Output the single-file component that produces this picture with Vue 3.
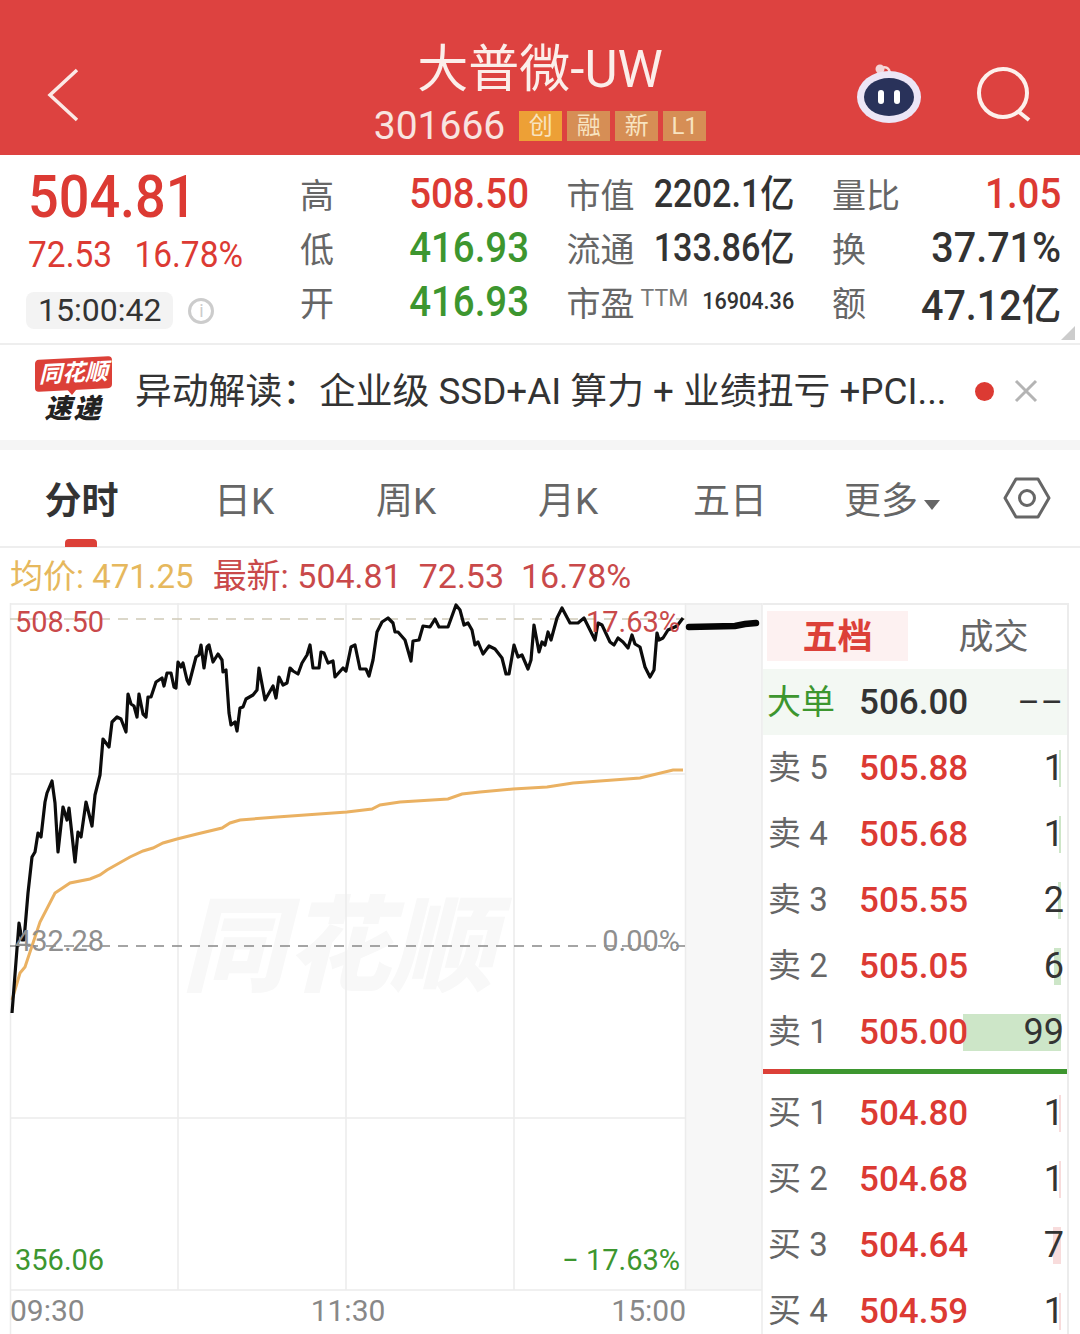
<template>
  <div class="page">
    <header class="topbar">
      <svg class="back" width="40" height="60" viewBox="0 0 40 60"><path d="M33 5 L6 30 L33 55" fill="none" stroke="#fbe9e6" stroke-width="3.5" /></svg>
      <div class="title-box">
        <div class="title">大普微-UW</div>
        <div class="subline">
          <span class="code">301666</span>
          <span v-for="(t, i) in tags" :key="t" class="tag" :class="{ first: i === 0 }">{{ t }}</span>
        </div>
      </div>
      <div class="top-icons">
        <svg width="70" height="70" viewBox="0 0 70 70">
          <path d="M26 10 C30 5 36 7 36 15" fill="none" stroke="#f6dcdc" stroke-width="2.5" />
          <circle cx="26" cy="9" r="4.5" fill="#f3d5d8" />
          <ellipse cx="35" cy="37" rx="32" ry="26" fill="#ece6f6" />
          <ellipse cx="35" cy="37" rx="25" ry="19" fill="#29325a" />
          <rect x="24" y="30" width="6" height="14" rx="3" fill="#fff" />
          <rect x="40" y="30" width="6" height="14" rx="3" fill="#fff" />
        </svg>
        <svg width="60" height="60" viewBox="0 0 60 60">
          <circle cx="26" cy="28" r="24" fill="none" stroke="#fdf0ec" stroke-width="4" />
          <path d="M42 47 L52 55" stroke="#fdf0ec" stroke-width="4" />
        </svg>
      </div>
    </header>

    <section class="quote">
      <div class="q-main">
        <div class="price">504.81</div>
        <div class="change"><span>72.53</span><span>16.78%</span></div>
        <div class="time-row">
          <span class="time">15:00:42</span>
          <span class="info">i</span>
        </div>
      </div>
      <div class="q-grid">
        <template v-for="row in quoteRows" :key="row.a">
          <div class="q-cell">
            <span class="q-label">{{ row.a }}</span>
            <span class="q-val" :class="row.ac">{{ row.av }}</span>
          </div>
          <div class="q-cell">
            <span class="q-label">{{ row.b }}<sup v-if="row.sup" class="ttm">{{ row.sup }}</sup></span>
            <span class="q-mid" :class="{ tiny: row.sup }">{{ row.bv }}</span>
          </div>
          <div class="q-cell">
            <span class="q-label">{{ row.c }}</span>
            <span class="q-val" :class="row.cc">{{ row.cv }}</span>
          </div>
        </template>
      </div>
      <i class="corner"></i>
    </section>

    <section class="news">
      <div class="logo">
        <div class="logo-top"><span>同花顺</span></div>
        <div class="logo-bottom">速递</div>
      </div>
      <div class="news-text">异动解读：企业级 SSD+AI 算力 + 业绩扭亏 +PCI...</div>
      <span class="dot"></span>
      <svg class="close" width="24" height="24" viewBox="0 0 24 24"><path d="M2 2 L22 22 M22 2 L2 22" stroke="#b4b4b4" stroke-width="3" /></svg>
    </section>

    <nav class="tabs">
      <div v-for="t in tabs" :key="t" class="tab" :class="{ active: t === '分时' }">
        {{ t }}<i v-if="t === '更多'" class="caret"></i>
      </div>
      <div class="tab-setting">
        <svg width="48" height="44" viewBox="0 0 48 44">
          <path d="M13 3 H35 L46 22 L35 41 H13 L2 22 Z" fill="none" stroke="#666" stroke-width="3" stroke-linejoin="round" />
          <circle cx="24" cy="22" r="7.5" fill="none" stroke="#666" stroke-width="3" />
        </svg>
      </div>
    </nav>

    <div class="legend">
      <span class="avg">均价: 471.25</span>
      <span class="latest">最新: 504.81&nbsp; 72.53&nbsp; 16.78%</span>
    </div>

    <section class="market">
      <div class="chart">
        <div class="after-hours"></div>
        <div class="watermark">同花顺</div>
        <svg class="plot" width="763" height="731" viewBox="0 603 763 731">
          <g stroke="#ececec" stroke-width="1.5" fill="none">
            <path d="M10.5 603 V1334 M178 603 V1290 M346 603 V1290 M514 603 V1290 M685.5 603 V1290 M762 603 V1334" />
            <path d="M10 604 H762 M10 774 H685 M10 1118 H685 M10 1290 H762" />
          </g>
          <path d="M10 619 H685" stroke="#cfcab8" stroke-width="1.5" stroke-dasharray="10 8" />
          <path d="M10 946 H685" stroke="#888" stroke-width="1.5" stroke-dasharray="10 8" />
          <polyline :points="avgLine" fill="none" stroke="#eab162" stroke-width="3" />
          <polyline :points="priceLine" fill="none" stroke="#0c0c0c" stroke-width="3.2" stroke-linejoin="round" />
          <path d="M689 627 L735 626 L745 624 L756 623" fill="none" stroke="#050505" stroke-width="6.5" stroke-linecap="round" />
        </svg>
        <span class="axis red" style="left:15px;top:1px">508.50</span>
        <span class="axis red right" style="top:1px">17.63%</span>
        <span class="axis gray" style="left:15px;top:320px">432.28</span>
        <span class="axis gray right" style="top:320px">0.00%</span>
        <span class="axis green" style="left:15px;top:639px">356.06</span>
        <span class="axis green right" style="top:639px">− 17.63%</span>
        <div class="times"><span>09:30</span><span>11:30</span><span>15:00</span></div>
      </div>

      <aside class="book">
        <div class="book-tabs">
          <span class="book-tab on">五档</span>
          <span class="book-tab">成交</span>
        </div>
        <div class="row big">
          <span class="name">大单</span>
          <span class="val dark">506.00</span>
          <span class="qty dash">––</span>
        </div>
        <div v-for="r in sells" :key="r.n" class="row">
          <span class="name">{{ r.n }}</span>
          <span class="val">{{ r.p }}</span>
          <span class="qty"><i class="depth sell" :style="{ width: r.w + 'px' }"></i><b>{{ r.q }}</b></span>
        </div>
        <div class="ratio"><i></i></div>
        <div v-for="r in buys" :key="r.n" class="row">
          <span class="name">{{ r.n }}</span>
          <span class="val">{{ r.p }}</span>
          <span class="qty"><i class="depth buy" :style="{ width: r.w + 'px' }"></i><b>{{ r.q }}</b></span>
        </div>
      </aside>
    </section>
  </div>
</template>

<script setup>
const tags = ['创', '融', '新', 'L1']
const tabs = ['分时', '日K', '周K', '月K', '五日', '更多']

const quoteRows = [
  { a: '高', av: '508.50', ac: 'up', b: '市值', bv: '2202.1亿', c: '量比', cv: '1.05', cc: 'up' },
  { a: '低', av: '416.93', ac: 'down', b: '流通', bv: '133.86亿', c: '换', cv: '37.71%', cc: '' },
  { a: '开', av: '416.93', ac: 'down', b: '市盈', sup: 'TTM', bv: '16904.36', c: '额', cv: '47.12亿', cc: '' },
]

const sells = [
  { n: '卖 5', p: '505.88', q: 1, w: 2 },
  { n: '卖 4', p: '505.68', q: 1, w: 2 },
  { n: '卖 3', p: '505.55', q: 2, w: 3 },
  { n: '卖 2', p: '505.05', q: 6, w: 7 },
  { n: '卖 1', p: '505.00', q: 99, w: 98 },
]
const buys = [
  { n: '买 1', p: '504.80', q: 1, w: 2 },
  { n: '买 2', p: '504.68', q: 1, w: 2 },
  { n: '买 3', p: '504.64', q: 7, w: 8 },
  { n: '买 4', p: '504.59', q: 1, w: 2 },
]

const priceLine = '12,1013 19,923 22,940 24,940 28,893 32,857 35,852 38,833 41,837 45,802 47,793 52,781 55,803 58,852 63,807 67,820 69,808 75,862 78,832 81,837 86,802 92,826 95,795 100,775 103,739 109,747 112,722 117,717 121,719 126,732 128,694 131,704 134,706 137,717 139,694 143,714 146,717 148,697 151,697 156,682 162,678 164,686 167,673 171,673 174,687 176,688 178,662 181,667 183,663 187,680 189,684 196,657 199,655 201,645 204,668 207,647 209,645 213,662 218,654 222,660 223,672 226,670 229,713 231,725 235,722 237,731 240,708 243,707 246,699 253,695 257,690 259,668 265,700 273,686 276,698 279,677 283,685 287,683 290,668 293,671 298,674 302,663 307,655 310,645 313,668 319,668 321,652 324,653 328,663 333,661 335,677 343,668 346,671 351,647 355,645 360,669 366,669 369,676 373,660 377,632 382,622 388,618 393,623 395,632 398,632 405,640 411,661 413,641 419,640 423,626 430,627 435,619 439,627 448,627 456,605 460,610 464,625 468,623 472,630 475,645 478,642 483,654 489,646 495,649 502,658 506,674 509,674 514,645 518,657 522,655 528,669 531,660 534,625 539,652 542,642 545,645 548,632 551,640 557,618 562,608 570,623 578,623 584,618 595,640 598,623 602,625 610,642 614,645 618,638 623,642 628,648 632,635 635,644 640,647 645,667 650,677 654,670 657,633 659,640 663,638 668,630 677,626 683,618'

const avgLine = '12,1000 20,973 25,967 40,922 55,893 70,883 90,879 100,875 107,870 130,857 143,851 153,848 163,843 177,839 197,834 222,828 230,823 240,820 277,817 347,812 372,809 380,805 400,802 448,799 462,794 480,792 513,789 547,787 573,783 640,778 673,770 683,770'
</script>

<style scoped>
.page{width:1080px;height:1334px;overflow:hidden;background:#fff;font-family:Roboto,"Noto Sans CJK SC",sans-serif;color:#333}
.topbar{height:155px;box-sizing:border-box;padding-top:35px;background:#dd4240;display:grid;grid-template-columns:1fr auto 1fr;align-items:center}
.back{margin-left:44px}
.title-box{align-self:start;margin-top:5px;text-align:center;color:#fbeeea}
.title{font-size:51px;line-height:60px}
.subline{display:flex;align-items:center;gap:5px;height:42px;margin-top:5px}
.code{font-size:39px;margin-right:9px;color:#f8e4e0}
.tag{width:43px;height:30px;line-height:30px;text-align:center;font-size:24px;background:#d68e55;color:#f8e3c0}
.tag.first{background:#eda036}
.top-icons{display:flex;align-items:center;justify-content:flex-end;gap:53px;padding-right:43px}
.quote{position:relative;height:190px;box-sizing:border-box;border-bottom:2px solid #eee;display:flex}
.q-main{width:300px;box-sizing:border-box;padding-left:28px;color:#dc3a33}
.price{font-size:60px;line-height:84px;font-weight:500;transform:scaleX(.9);transform-origin:left center}
.change{display:flex;gap:24px;font-size:36px;line-height:32px;transform:scaleX(.93);transform-origin:left center}
.time-row{display:flex;align-items:center;gap:15px;margin-top:21px;margin-left:-2px}
.time{background:#f3f3f3;border-radius:8px;color:#333;font-size:32px;line-height:37px;padding:0 12px}
.info{width:26px;height:26px;box-sizing:border-box;border:3px solid #ccc;border-radius:50%;color:#ccc;font-size:18px;line-height:20px;text-align:center}
.q-grid{display:grid;grid-template-columns:229px 228px 229px;column-gap:37.5px;grid-auto-rows:54px;padding-top:11px}
.q-cell{display:flex;align-items:center;justify-content:space-between}
.q-label{font-size:34px;color:#666;white-space:nowrap}
.ttm{font-size:23px;color:#777;margin-left:6px;vertical-align:10px;line-height:0}
.q-val{display:inline-block;font-size:42px;font-weight:500;color:#333;transform:scaleX(.94);transform-origin:right center}
.q-val.up,.q-val.down{transform:scaleX(.915)}
.q-mid{display:inline-block;font-size:38px;font-weight:500;color:#333;transform:translateY(-3px) scaleX(.9);transform-origin:right center}
.q-mid.tiny{font-size:24px;transform:scaleX(.9)}
.q-val.up{color:#dc3a33}
.q-val.down{color:#3d962f}
.corner{position:absolute;right:5px;bottom:3px;border-style:solid;border-width:0 0 14px 14px;border-color:transparent transparent #ccc transparent}
.news{height:95px;border-bottom:10px solid #f5f5f5;display:flex;align-items:center;padding-left:35px;padding-right:42px}
.logo{width:77px;text-align:center;flex:none}
.logo-top{position:relative;background:#dc4038;border-radius:4px;height:32px;line-height:32px;color:#fff;font-size:23px;font-weight:700;font-style:italic;transform:skewY(-3deg)}
.logo-top::after{content:"";position:absolute;left:32px;bottom:-5px;border-style:solid;border-width:6px 5px 0 5px;border-color:#dc4038 transparent transparent transparent}
.logo-top span{display:block}
.logo-bottom{font-size:27px;line-height:38px;font-weight:900;font-style:italic;color:#222;letter-spacing:2px}
.news-text{font-size:36.8px;line-height:44px;color:#333;margin:-1px 0 0 23px;white-space:nowrap;flex:1}
.dot{width:19px;height:19px;border-radius:50%;background:#dc3a33;margin:-2px 20px 0 0;flex:none}
.close{flex:none;margin-top:-3px}
.tabs{height:98px;box-sizing:border-box;border-bottom:2px solid #eee;display:grid;grid-template-columns:163px repeat(5,162px) 1fr;align-items:center}
.tab{position:relative;text-align:center;font-size:37px;color:#666}
.tab.active{color:#333;font-weight:700}
.tab.active::after{content:"";position:absolute;left:65px;bottom:-22px;width:32px;height:8px;border-radius:4px 4px 0 0;background:#dc4038}
.caret{display:inline-block;margin-left:6px;vertical-align:4px;border-style:solid;border-width:10px 8px 0 8px;border-color:#666 transparent transparent transparent}
.tab-setting{display:flex;justify-content:center}
.legend{height:55px;box-sizing:border-box;padding:0 0 4px 10px;display:flex;align-items:center;gap:19px;font-size:33px}
.avg{color:#e6b85d}
.latest{color:#c9494a;font-size:34px}
.market{position:relative;display:flex;height:731px}
.chart{position:relative;width:763px;flex:none}
.after-hours{position:absolute;left:686px;top:0;width:76px;height:687px;background:#f7f7f7}
.watermark{position:absolute;left:182px;top:280px;width:330px;font-size:104px;line-height:130px;font-weight:900;font-style:italic;color:#f8f8f8;white-space:nowrap}
.plot{position:absolute;left:0;top:0}
.axis{position:absolute;font-size:29px;line-height:36px}
.axis.right{right:83px}
.axis.red{color:#c9494a}
.axis.gray{color:#8f8f8f}
.axis.green{color:#3d962f}
.times{position:absolute;left:10px;right:77px;top:690px;display:flex;justify-content:space-between;font-size:30px;line-height:36px;color:#888}
.book{width:306px;margin-left:0;box-sizing:border-box;border-right:2px solid #ececec;border-top:2px solid #ececec}
.book-tabs{display:flex;height:64px;box-sizing:border-box;padding:6px 0 0 4px}
.book-tab{flex:none;width:141px;height:50px;line-height:54px;text-align:center;font-size:35px;color:#666;margin-right:15px}
.book-tab.on{background:#fdf1f1;color:#dc4038;font-weight:700}
.row{display:grid;grid-template-columns:91px 107px 1fr;align-items:center;height:66px;padding:0 3px 0 5px;font-size:36px}
.row.big{background:#f3f8f3}
.name{font-size:33px;line-height:40px;margin-top:0;color:#666;white-space:nowrap}
.big .name{color:#3d962f;margin-left:-1px;font-size:34px}
.val{position:relative;z-index:1;font-weight:500;font-size:35px;color:#dc3a33}
.val.dark{color:#333}
.qty{position:relative;text-align:right;color:#333;font-size:36px;height:37px;line-height:37px}
.qty.dash{font-size:34px;letter-spacing:1px}
.qty b{position:relative;font-weight:400}
.depth{position:absolute;right:3px;top:0;height:37px}
.depth.sell{background:#cde6c8}
.depth.buy{background:#f8dcdc}
.ratio{height:5px;margin:4px 0 6px;background:#3d962f}
.ratio i{display:block;width:27px;height:5px;background:#dc4038}
</style>
